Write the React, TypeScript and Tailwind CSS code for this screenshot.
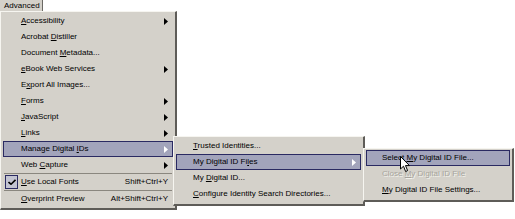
import React from 'react';

type Item = {
  label: string;
  u?: number; // index of underlined letter
  arrow?: boolean;
  hot?: boolean;
  shortcut?: string;
  checked?: boolean;
  disabled?: boolean;
  sep?: boolean;
};

const mainItems: Item[] = [
  { label: 'Accessibility', u: 0, arrow: true },
  { label: 'Acrobat Distiller', u: 8 },
  { label: 'Document Metadata...', u: 9 },
  { label: 'eBook Web Services', u: 0, arrow: true },
  { label: 'Export All Images...', u: 1 },
  { label: 'Forms', u: 0, arrow: true },
  { label: 'JavaScript', u: 0, arrow: true },
  { label: 'Links', u: 0, arrow: true },
  { label: 'Manage Digital IDs', u: 15, arrow: true, hot: true },
  { label: 'Web Capture', u: 4, arrow: true },
  { label: '', sep: true },
  { label: 'Use Local Fonts', u: 0, shortcut: 'Shift+Ctrl+Y', checked: true },
  { label: '', sep: true },
  { label: 'Overprint Preview', u: 0, shortcut: 'Alt+Shift+Ctrl+Y' },
];

const subItems: Item[] = [
  { label: 'Trusted Identities...', u: 0 },
  { label: 'My Digital ID Files', u: 16, arrow: true, hot: true },
  { label: 'My Digital ID...', u: 3 },
  { label: 'Configure Identity Search Directories...', u: 0 },
];

const fileItems: Item[] = [
  { label: 'Select My Digital ID File...', u: 7, hot: true },
  { label: 'Close My Digital ID File', u: 6, disabled: true },
  { label: 'My Digital ID File Settings...', u: 0 },
];

const Label = ({ text, u }: { text: string; u?: number }) => {
  if (u === undefined) return <span>{text}</span>;
  return (
    <span>
      {text.slice(0, u)}
      <span className="underline underline-offset-1">{text.slice(u, u + 1)}</span>
      {text.slice(u + 1)}
    </span>
  );
};

const Arrow = ({ light }: { light?: boolean }) => (
  <svg width="4" height="7" viewBox="0 0 4 7" className="shrink-0">
    <path d="M0 0 L4 3.5 L0 7 Z" fill={light ? '#ffffff' : '#000000'} />
  </svg>
);

const Row = ({ item, padLeft, padRight }: { item: Item; padLeft: string; padRight: string }) => {
  if (item.sep) {
    return <div className="h-[1px] mx-[3px] bg-[#8a877f]" />;
  }
  return (
    <div
      className={`h-[16px] flex items-center justify-between mx-[2px] border ${
        item.hot ? 'bg-[#a2a4bb] border-[#2a2a62]' : 'border-transparent'
      } ${padLeft} ${padRight}`}
    >
      <div className="flex items-center">
        {item.checked && (
          <div className="-ml-[16px] mr-[3px] w-[13px] h-[14px] border border-[#2a2a62] bg-[#c3c4d2] flex items-center justify-center">
            <svg width="8" height="6" viewBox="0 0 8 6">
              <path d="M0.5 3 L3 5.2 L7.5 0.8" stroke="#000" strokeWidth="1.6" fill="none" />
            </svg>
          </div>
        )}
        <span
          className={
            item.disabled ? 'text-[#a7a49c] [text-shadow:1px_1px_0_#f2f1ec]' : 'text-black'
          }
        >
          <Label text={item.label} u={item.u} />
        </span>
      </div>
      {item.arrow && <Arrow light={item.hot} />}
      {item.shortcut && <span>{item.shortcut}</span>}
    </div>
  );
};

const Cursor = () => (
  <svg width="11" height="17" viewBox="0 0 11 17" className="absolute left-[400px] top-[156px]">
    <path
      d="M0.5 0.5 L0.5 13 L3.5 10.2 L5.6 15.5 L7.6 14.6 L5.5 9.6 L9.5 9.6 Z"
      fill="#ffffff"
      stroke="#000000"
      strokeWidth="1"
    />
  </svg>
);

const panel =
  'bg-[#d4d1ca] border-t border-l border-t-[#f6f5f0] border-l-[#f6f5f0] border-r-2 border-b-2 border-r-[#5e5c58] border-b-[#5e5c58]';

export default function App() {
  return (
    <div className="relative w-[515px] h-[219px] bg-white overflow-hidden font-['Liberation_Sans',Arial,sans-serif] text-[8px] leading-none text-black">
      {/* menu bar */}
      <div className="flex h-[11px]">
        <div className="w-[43px] h-full bg-[#d4d1ca] border-r border-[#6b6964] flex items-center pl-[4px]">
          Advanced
        </div>
      </div>

      {/* main dropdown */}
      <div className={`w-[177px] py-[1px] ${panel}`}>
        {mainItems.map((it, i) => (
          <Row key={i} item={it} padLeft="pl-[17px]" padRight="pr-[4px]" />
        ))}
      </div>

      {/* Manage Digital IDs submenu */}
      <div className={`absolute left-[173px] top-[136px] w-[192px] pt-[1px] pb-[2px] ${panel}`}>
        {subItems.map((it, i) => (
          <Row key={i} item={it} padLeft="pl-[16px]" padRight="pr-[4px]" />
        ))}
      </div>

      {/* My Digital ID Files submenu */}
      <div className={`absolute left-[363px] top-[148px] w-[151px] pt-[1px] pb-[2px] ${panel}`}>
        {fileItems.map((it, i) => (
          <Row key={i} item={it} padLeft="pl-[15px]" padRight="pr-[4px]" />
        ))}
      </div>

      <Cursor />
    </div>
  );
}
